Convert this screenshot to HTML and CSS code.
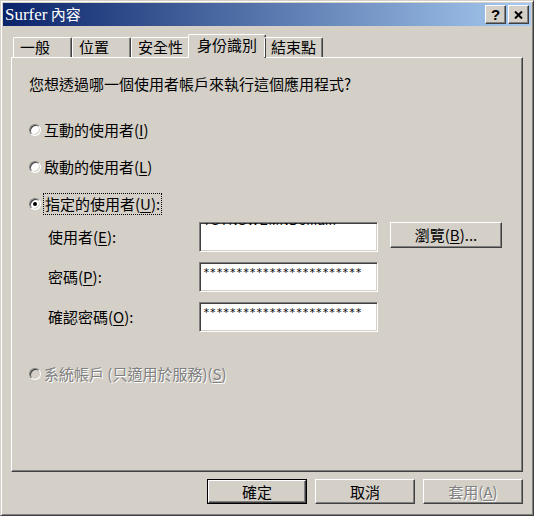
FILE: index.html
```html
<!DOCTYPE html>
<html lang="zh-Hant">
<head>
<meta charset="utf-8">
<title>Surfer 內容</title>
<link rel="stylesheet" href="styles.css">
</head>
<body>
<div class="window">
  <div class="titlebar">
    <span class="title"><span class="title-latin">Surfer</span> 內容</span>
    <div class="tb-buttons">
      <div class="tb-btn help">?</div>
      <div class="tb-btn close">
        <svg width="9" height="8" viewBox="0 0 9 8"><path d="M1 0.5 L8 7.5 M8 0.5 L1 7.5" stroke="#000" stroke-width="2" fill="none"/></svg>
      </div>
    </div>
  </div>
  <div class="body">
    <div class="tabs">
      <div class="tab">一般</div>
      <div class="tab">位置</div>
      <div class="tab">安全性</div>
      <div class="tab active">身份識別</div>
      <div class="tab">結束點</div>
    </div>
    <div class="panel">
      <p class="question">您想透過哪一個使用者帳戶來執行這個應用程式?</p>
      <div class="radio-row r1"><span class="radio"></span><span>互動的使用者(<u>I</u>)</span></div>
      <div class="radio-row r2"><span class="radio"></span><span>啟動的使用者(<u>L</u>)</span></div>
      <div class="radio-row r3"><span class="radio"><span class="dot"></span></span><span class="focus">指定的使用者(<u>U</u>):</span></div>
      <div class="fields">
        <div class="label">使用者(<u>E</u>):</div>
        <div class="input"><span class="clipped">TSTNSWEMNDomain</span></div>
        <div class="btn browse">瀏覽(<u>B</u>)...</div>
        <div class="label">密碼(<u>P</u>):</div>
        <div class="input pw">************************</div>
        <div></div>
        <div class="label">確認密碼(<u>O</u>):</div>
        <div class="input pw">************************</div>
        <div></div>
      </div>
      <div class="radio-row r4 disabled"><span class="radio"></span><span>系統帳戶 (只適用於服務)(<u>S</u>)</span></div>
    </div>
    <div class="footer">
      <div class="btn default"><div class="btn-inner">確定</div></div>
      <div class="btn">取消</div>
      <div class="btn disabled">套用(<u>A</u>)</div>
    </div>
  </div>
</div>
</body>
</html>
```

FILE: styles.css
```css
* { box-sizing: border-box; }
html, body { margin: 0; padding: 0; background: #d4d0c8; }
body {
  font-family: "Noto Sans CJK TC", "Noto Sans", sans-serif;
  font-size: 15px;
  line-height: 20px;
  color: #000;
}
u { text-decoration: underline; text-underline-offset: 2px; }

.window {
  width: 534px;
  height: 516px;
  background: #d4d0c8;
  border: 1px solid;
  border-color: #d4d0c8 #404040 #404040 #d4d0c8;
  box-shadow: inset 1px 1px #fff, inset -1px -1px #808080;
  padding: 2px;
  display: flex;
  flex-direction: column;
}

.titlebar {
  height: 23px;
  flex: none;
  background: linear-gradient(to right, #0a246a, #a6caf0);
  display: flex;
  align-items: center;
  justify-content: space-between;
  padding: 0 2px 0 2px;
}
.title {
  color: #fff;
  font-size: 15px;
  line-height: 20px;
  white-space: nowrap;
}
.title-latin { font-family: "Liberation Serif", serif; font-size: 17px; }
.tb-buttons { display: flex; gap: 2px; }
.tb-btn {
  width: 21px;
  height: 19px;
  background: #d4d0c8;
  border: 1px solid;
  border-color: #fff #404040 #404040 #fff;
  box-shadow: inset -1px -1px #808080;
  display: flex;
  align-items: center;
  justify-content: center;
}
.tb-btn.help {
  font-family: "Liberation Sans", sans-serif;
  font-weight: bold;
  font-size: 15px;
  line-height: 15px;
  padding-bottom: 1px;
}

.body {
  flex: 1;
  padding: 8px 8px 0 8px;
  display: flex;
  flex-direction: column;
}

.tabs {
  height: 23px;
  display: flex;
  align-items: flex-end;
  padding-left: 2px;
  position: relative;
  z-index: 1;
}
.tab {
  height: 20px;
  min-width: 59px;
  padding: 0 6px;
  border-top: 1px solid #fff;
  border-left: 1px solid #fff;
  border-right: 1px solid #404040;
  box-shadow: inset -1px 0 #808080;
  border-radius: 2px 2px 0 0;
  line-height: 18px;
  white-space: nowrap;
}
.tab.active {
  height: 24px;
  margin: 0 -2px -1px -2px;
  padding: 0 8px 0 8px;
  background: #d4d0c8;
  line-height: 20px;
}

.panel {
  height: 415px;
  flex: none;
  border: 1px solid;
  border-color: #fff #404040 #404040 #fff;
  box-shadow: inset -1px -1px #808080;
  padding: 16px 0 0 17px;
  display: flex;
  flex-direction: column;
}
.question { margin: 0; height: 20px; white-space: nowrap; }

.radio-row {
  display: flex;
  align-items: center;
  height: 20px;
  white-space: nowrap;
}
.r1 { margin-top: 26px; }
.r2 { margin-top: 17px; }
.r3 { margin-top: 17px; }
.r4 { margin-top: 32px; }
.radio {
  width: 12px;
  height: 12px;
  flex: none;
  border-radius: 50%;
  border: 1px solid;
  border-color: #808080 #fff #fff #808080;
  background: #fff;
  box-shadow: inset 1px 1px #404040, inset -1px -1px #d4d0c8;
  margin-right: 3px;
  display: flex;
  align-items: center;
  justify-content: center;
}
.dot { width: 4px; height: 4px; border-radius: 50%; background: #000; }
.focus { outline: 1px dotted #000; outline-offset: 0; padding: 0 1px; }
.disabled { color: #808080; text-shadow: 1px 1px 0 #fff; }
.radio-row.disabled .radio { background: #d4d0c8; }

.fields {
  margin-top: 8px;
  padding-left: 19px;
  display: grid;
  grid-template-columns: 139px 179px 112px;
  grid-auto-rows: 30px;
  row-gap: 10px;
  column-gap: 12px;
  align-items: start;
}
.label { height: 30px; line-height: 30px; white-space: nowrap; }
.input {
  height: 30px;
  background: #fff;
  border: 1px solid;
  border-color: #808080 #fff #fff #808080;
  box-shadow: inset 1px 1px #404040, inset -1px -1px #d4d0c8;
  padding: 2px 3px;
  overflow: hidden;
  white-space: nowrap;
}
.input.pw {
  font-family: "DejaVu Sans Mono", monospace;
  font-size: 11px;
  line-height: 14px;
  padding-top: 3px;
}
.clipped {
  display: block;
  margin-top: -11px;
  font-family: "Liberation Sans", sans-serif;
  font-size: 12px;
  line-height: 14px;
  letter-spacing: 1px;
}

.btn {
  height: 26px;
  background: #d4d0c8;
  border: 1px solid;
  border-color: #fff #404040 #404040 #fff;
  box-shadow: inset -1px -1px #808080;
  display: flex;
  align-items: center;
  justify-content: center;
  white-space: nowrap;
}
.browse { height: 26px; }

.footer {
  margin-top: 7px;
  display: flex;
  justify-content: flex-end;
  gap: 8px;
}
.footer .btn { width: 100px; height: 25px; }
.footer .btn.default {
  border: 1px solid #000;
  box-shadow: none;
  padding: 0;
}
.btn-inner {
  width: 100%;
  height: 100%;
  border: 1px solid;
  border-color: #fff #404040 #404040 #fff;
  box-shadow: inset -1px -1px #808080;
  display: flex;
  align-items: center;
  justify-content: center;
}
```
